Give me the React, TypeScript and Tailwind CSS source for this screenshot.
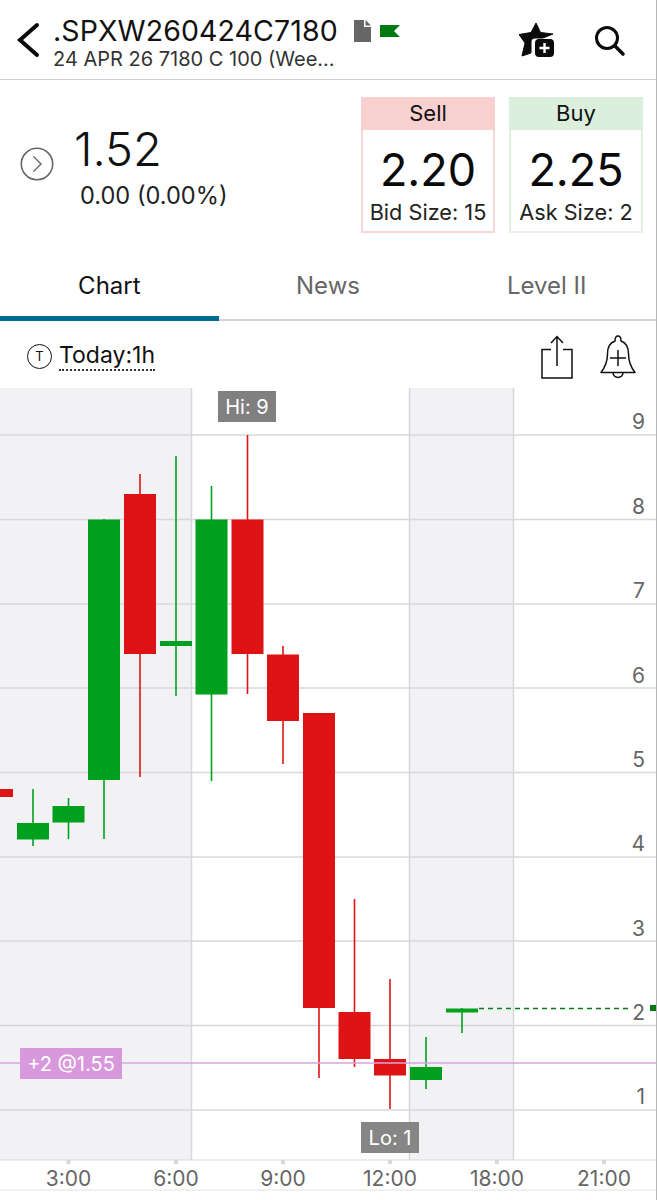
import React from "react";

const RED = "#de1414";
const GREEN = "#00a01f";
const hLines = [435, 519.5, 604, 688, 772.5, 857, 941, 1025.5, 1110];
const yLabels: [string, number][] = [["9", 421], ["8", 506], ["7", 590], ["6", 675], ["5", 759], ["4", 843], ["3", 928], ["2", 1012], ["1", 1096]];
const xLabels: [string, number][] = [["3:00", 68.5], ["6:00", 176], ["9:00", 283], ["12:00", 390], ["18:00", 497], ["21:00", 604]];

type Candle = { x: number; top: number; bottom: number; hi: number; lo: number; c: string };
const candles: Candle[] = [
  { x: -3, top: 789, bottom: 797, hi: 789, lo: 797, c: RED },
  { x: 33, top: 823, bottom: 839.5, hi: 789, lo: 846, c: GREEN },
  { x: 68.5, top: 806, bottom: 822.5, hi: 798, lo: 839, c: GREEN },
  { x: 104, top: 519.5, bottom: 780, hi: 519, lo: 839, c: GREEN },
  { x: 140, top: 494, bottom: 654, hi: 474, lo: 777, c: RED },
  { x: 176, top: 641, bottom: 646, hi: 456, lo: 696, c: GREEN },
  { x: 211.5, top: 519.5, bottom: 694.5, hi: 486, lo: 781, c: GREEN },
  { x: 247.5, top: 519.5, bottom: 654, hi: 435, lo: 694, c: RED },
  { x: 283, top: 654.5, bottom: 721, hi: 646, lo: 764, c: RED },
  { x: 319, top: 713, bottom: 1008, hi: 713, lo: 1078, c: RED },
  { x: 354.5, top: 1012, bottom: 1059, hi: 899, lo: 1067, c: RED },
  { x: 390, top: 1059, bottom: 1075.5, hi: 979, lo: 1109, c: RED },
  { x: 426, top: 1067, bottom: 1080, hi: 1037, lo: 1089, c: GREEN },
  { x: 462, top: 1008.5, bottom: 1012.5, hi: 1008, lo: 1033, c: GREEN },
];

const Y0 = 388;

function Chart() {
  return (
    <svg width="656" height="803" viewBox={`0 ${Y0} 656 803`} className="block" fontFamily="Inter, 'Liberation Sans', sans-serif">
      <rect x="0" y={Y0} width="192" height={1160 - Y0} fill="#f2f2f5" />
      <rect x="409" y={Y0} width="105" height={1160 - Y0} fill="#f2f2f5" />
      {hLines.map((y) => (
        <line key={y} x1="0" x2="656" y1={y} y2={y} stroke="#d8d8da" strokeWidth="1.5" />
      ))}
      {[191.5, 409.5, 513.5].map((x) => (
        <line key={x} x1={x} x2={x} y1={Y0} y2="1160" stroke="#d8d8da" strokeWidth="1.5" />
      ))}
      <line x1="0" x2="656" y1="1160" y2="1160" stroke="#d8d8da" strokeWidth="1" />
      <line x1="0" x2="656" y1="1190" y2="1190" stroke="#e2e2e2" strokeWidth="1" />
      {xLabels.map(([t, x]) => (
        <g key={t}>
          <rect x={x - 2} y="1160" width="4" height="4" fill="#d8d8da" />
          <text x={x} y="1186" textAnchor="middle" fontSize="21" fill="#666">{t}</text>
        </g>
      ))}
      {yLabels.map(([t, y]) => (
        <text key={t} x="645" y={y + 8} textAnchor="end" fontSize="21" fill="#666">{t}</text>
      ))}
      {candles.map((c, i) => (
        <g key={i}>
          <line x1={c.x} x2={c.x} y1={c.hi} y2={c.lo} stroke={c.c} strokeWidth="1.6" />
          <rect x={c.x - 16} y={c.top} width="32" height={c.bottom - c.top} fill={c.c} />
        </g>
      ))}
      <line x1="0" x2="656" y1="1063" y2="1063" stroke="#d9a3dd" strokeWidth="1.5" />
      <line x1="479" x2="628" y1="1008.5" y2="1008.5" stroke="#0a7a1a" strokeWidth="1.5" strokeDasharray="5 4" />
      <rect x="650" y="1005" width="7" height="6" fill="#007a10" />
    </svg>
  );
}

function Quote({ title, price, size, head, border }: { title: string; price: string; size: string; head: string; border: string }) {
  return (
    <div className={`flex h-[136px] w-[134px] flex-col border-2 border-t-0 ${border}`}>
      <div className={`-mx-[2px] flex h-[33px] items-center justify-center text-[22px] text-[#111] ${head}`}>{title}</div>
      <div className="flex flex-1 flex-col items-center">
        <div className="mt-[13px] text-[45px] leading-[54px] text-[#0a0a0a]">{price}</div>
        <div className="mt-[2px] text-[21.7px] leading-[26px] whitespace-nowrap text-[#222]">{size}</div>
      </div>
    </div>
  );
}

export default function App() {
  return (
    <div className="relative h-[1200px] w-[657px] overflow-hidden border-r border-[#b5b5b5] bg-white font-['Inter','Liberation_Sans',sans-serif] text-[#111]">
      <header className="flex h-[80px] items-center border-b border-[#cfcfcf] pl-[16px] pr-[30px]">
        <svg width="24" height="36" viewBox="0 0 24 36" className="mr-[13px] shrink-0">
          <path d="M21 3 L4 18 L21 33" fill="none" stroke="#0a0a0a" strokeWidth="4" strokeLinecap="round" strokeLinejoin="miter" />
        </svg>
        <div className="min-w-0 flex-1 pt-[6px]">
          <div className="flex items-center">
            <span className="text-[28.5px] leading-[32px] font-normal tracking-[0.1px] text-[#111]">.SPXW260424C7180</span>
            <svg width="18" height="22" viewBox="0 0 18 22" className="ml-[16px] shrink-0">
              <path d="M0 0 H10 V7 H17 V22 H0 Z" fill="#666" />
              <path d="M11.5 0 L17 5.5 H11.5 Z" fill="#666" />
            </svg>
            <svg width="20" height="12" viewBox="0 0 20 12" className="ml-[8px] shrink-0">
              <path d="M0 0 H20 L14 6 L20 12 H0 Z" fill="#007a10" />
            </svg>
          </div>
          <div className="mt-[1px] text-[20px] leading-[22px] text-[#333]">24 APR 26 7180 C 100 (Wee...</div>
        </div>
        <svg width="36" height="36" viewBox="0 0 36 36" className="mr-[39px] shrink-0">
          <path d="M17 1 L21.5 10.5 L34 12 L24 16 H16 C13 16 12 18 12 20 V31 L3 34 L6 21 L0 12.5 L12 10.5 Z" fill="#0a0a0a" stroke="#0a0a0a" strokeWidth="1" strokeLinejoin="round" />
          <rect x="16" y="17" width="19" height="18" rx="4" fill="#0a0a0a" />
          <path d="M25.5 21 V31 M20.5 26 H30.5" stroke="#fff" strokeWidth="2.4" />
        </svg>
        <svg width="32" height="32" viewBox="0 0 32 32" className="mt-[2px] shrink-0">
          <circle cx="13" cy="13" r="10.5" fill="none" stroke="#0a0a0a" strokeWidth="3" />
          <path d="M21 21 L29 29" stroke="#0a0a0a" strokeWidth="3.6" strokeLinecap="round" />
        </svg>
      </header>

      <section className="flex h-[180px] pt-[17px] pl-[20px]">
        <div className="flex flex-1">
          <svg width="34" height="34" viewBox="0 0 34 34" className="mt-[50px] shrink-0">
            <circle cx="17" cy="17" r="15.7" fill="none" stroke="#666" strokeWidth="1.6" />
            <path d="M13.5 9.5 L21 17 L13.5 24.5" fill="none" stroke="#666" strokeWidth="1.4" />
          </svg>
          <div className="ml-[20px] pt-[24px]">
            <div className="text-[47px] leading-[56px] font-light text-[#111]">1.52</div>
            <div className="mt-[5px] ml-[6px] text-[23.6px] leading-[28px] text-[#222]">0.00 (0.00%)</div>
          </div>
        </div>
        <div className="mr-[13px] flex gap-[14px]">
          <Quote title="Sell" price="2.20" size="Bid Size: 15" head="bg-[#f9d0d0]" border="border-[#f9d7d7]" />
          <Quote title="Buy" price="2.25" size="Ask Size: 2" head="bg-[#dcefdc]" border="border-[#e3efe3]" />
        </div>
      </section>

      <nav className="grid h-[61px] grid-cols-3 border-b-2 border-[#d6d6d6] text-[24px]">
        <div className="-mb-[2px] flex items-start justify-center border-b-[5px] border-[#006a94] pt-[8px] text-[#111]">Chart</div>
        <div className="flex items-start justify-center pt-[8px] text-[#666]">News</div>
        <div className="flex items-start justify-center pt-[8px] text-[#666]">Level II</div>
      </nav>

      <div className="flex h-[67px] items-center pt-[4px] pl-[27px] pr-[20px]">
        <div className="flex h-[25px] w-[25px] items-center justify-center rounded-full border-[1.5px] border-[#111] text-[13px] leading-none">T</div>
        <span className="ml-[7px] border-b-2 border-dotted border-[#333] text-[23px] leading-[27px] text-[#111]">Today:1h</span>
        <div className="flex-1" />
        <svg width="32" height="44" viewBox="0 0 32 44" className="mr-[27px]">
          <path d="M10 14.5 H1 V43 H31 V14.5 H22" fill="none" stroke="#111" strokeWidth="1.5" />
          <path d="M16 31 V1.5 M10 8 L16 1.5 L22 8" fill="none" stroke="#111" strokeWidth="1.5" />
        </svg>
        <svg width="36" height="44" viewBox="0 0 36 44">
          <path d="M18 1 C15.5 1 15 3.5 15 6 C9 8 7.5 13 7.5 19 C7.5 26 6 31 1 37.5 H35 C30 31 28.5 26 28.5 19 C28.5 13 27 8 21 6 C21 3.5 20.5 1 18 1 Z" fill="none" stroke="#111" strokeWidth="1.5" strokeLinejoin="round" />
          <path d="M13 37.5 C13 44 23 44 23 37.5" fill="none" stroke="#111" strokeWidth="1.5" />
          <path d="M18 15 V31 M10 23 H26" stroke="#111" strokeWidth="1.5" />
        </svg>
      </div>

      <div className="relative">
        <Chart />
        <div className="absolute left-[218px] top-[3px] flex h-[31px] w-[58px] items-center justify-center bg-[#808080] text-[20px] text-white">Hi: 9</div>
        <div className="absolute left-[361px] top-[734px] flex h-[31px] w-[58px] items-center justify-center bg-[#808080]/95 text-[20px] text-white">Lo: 1</div>
        <div className="absolute left-[20px] top-[660px] flex h-[31px] w-[102px] items-center justify-center bg-[#d898dc] text-[20px] whitespace-nowrap text-white">+2 @1.55</div>
      </div>
    </div>
  );
}
